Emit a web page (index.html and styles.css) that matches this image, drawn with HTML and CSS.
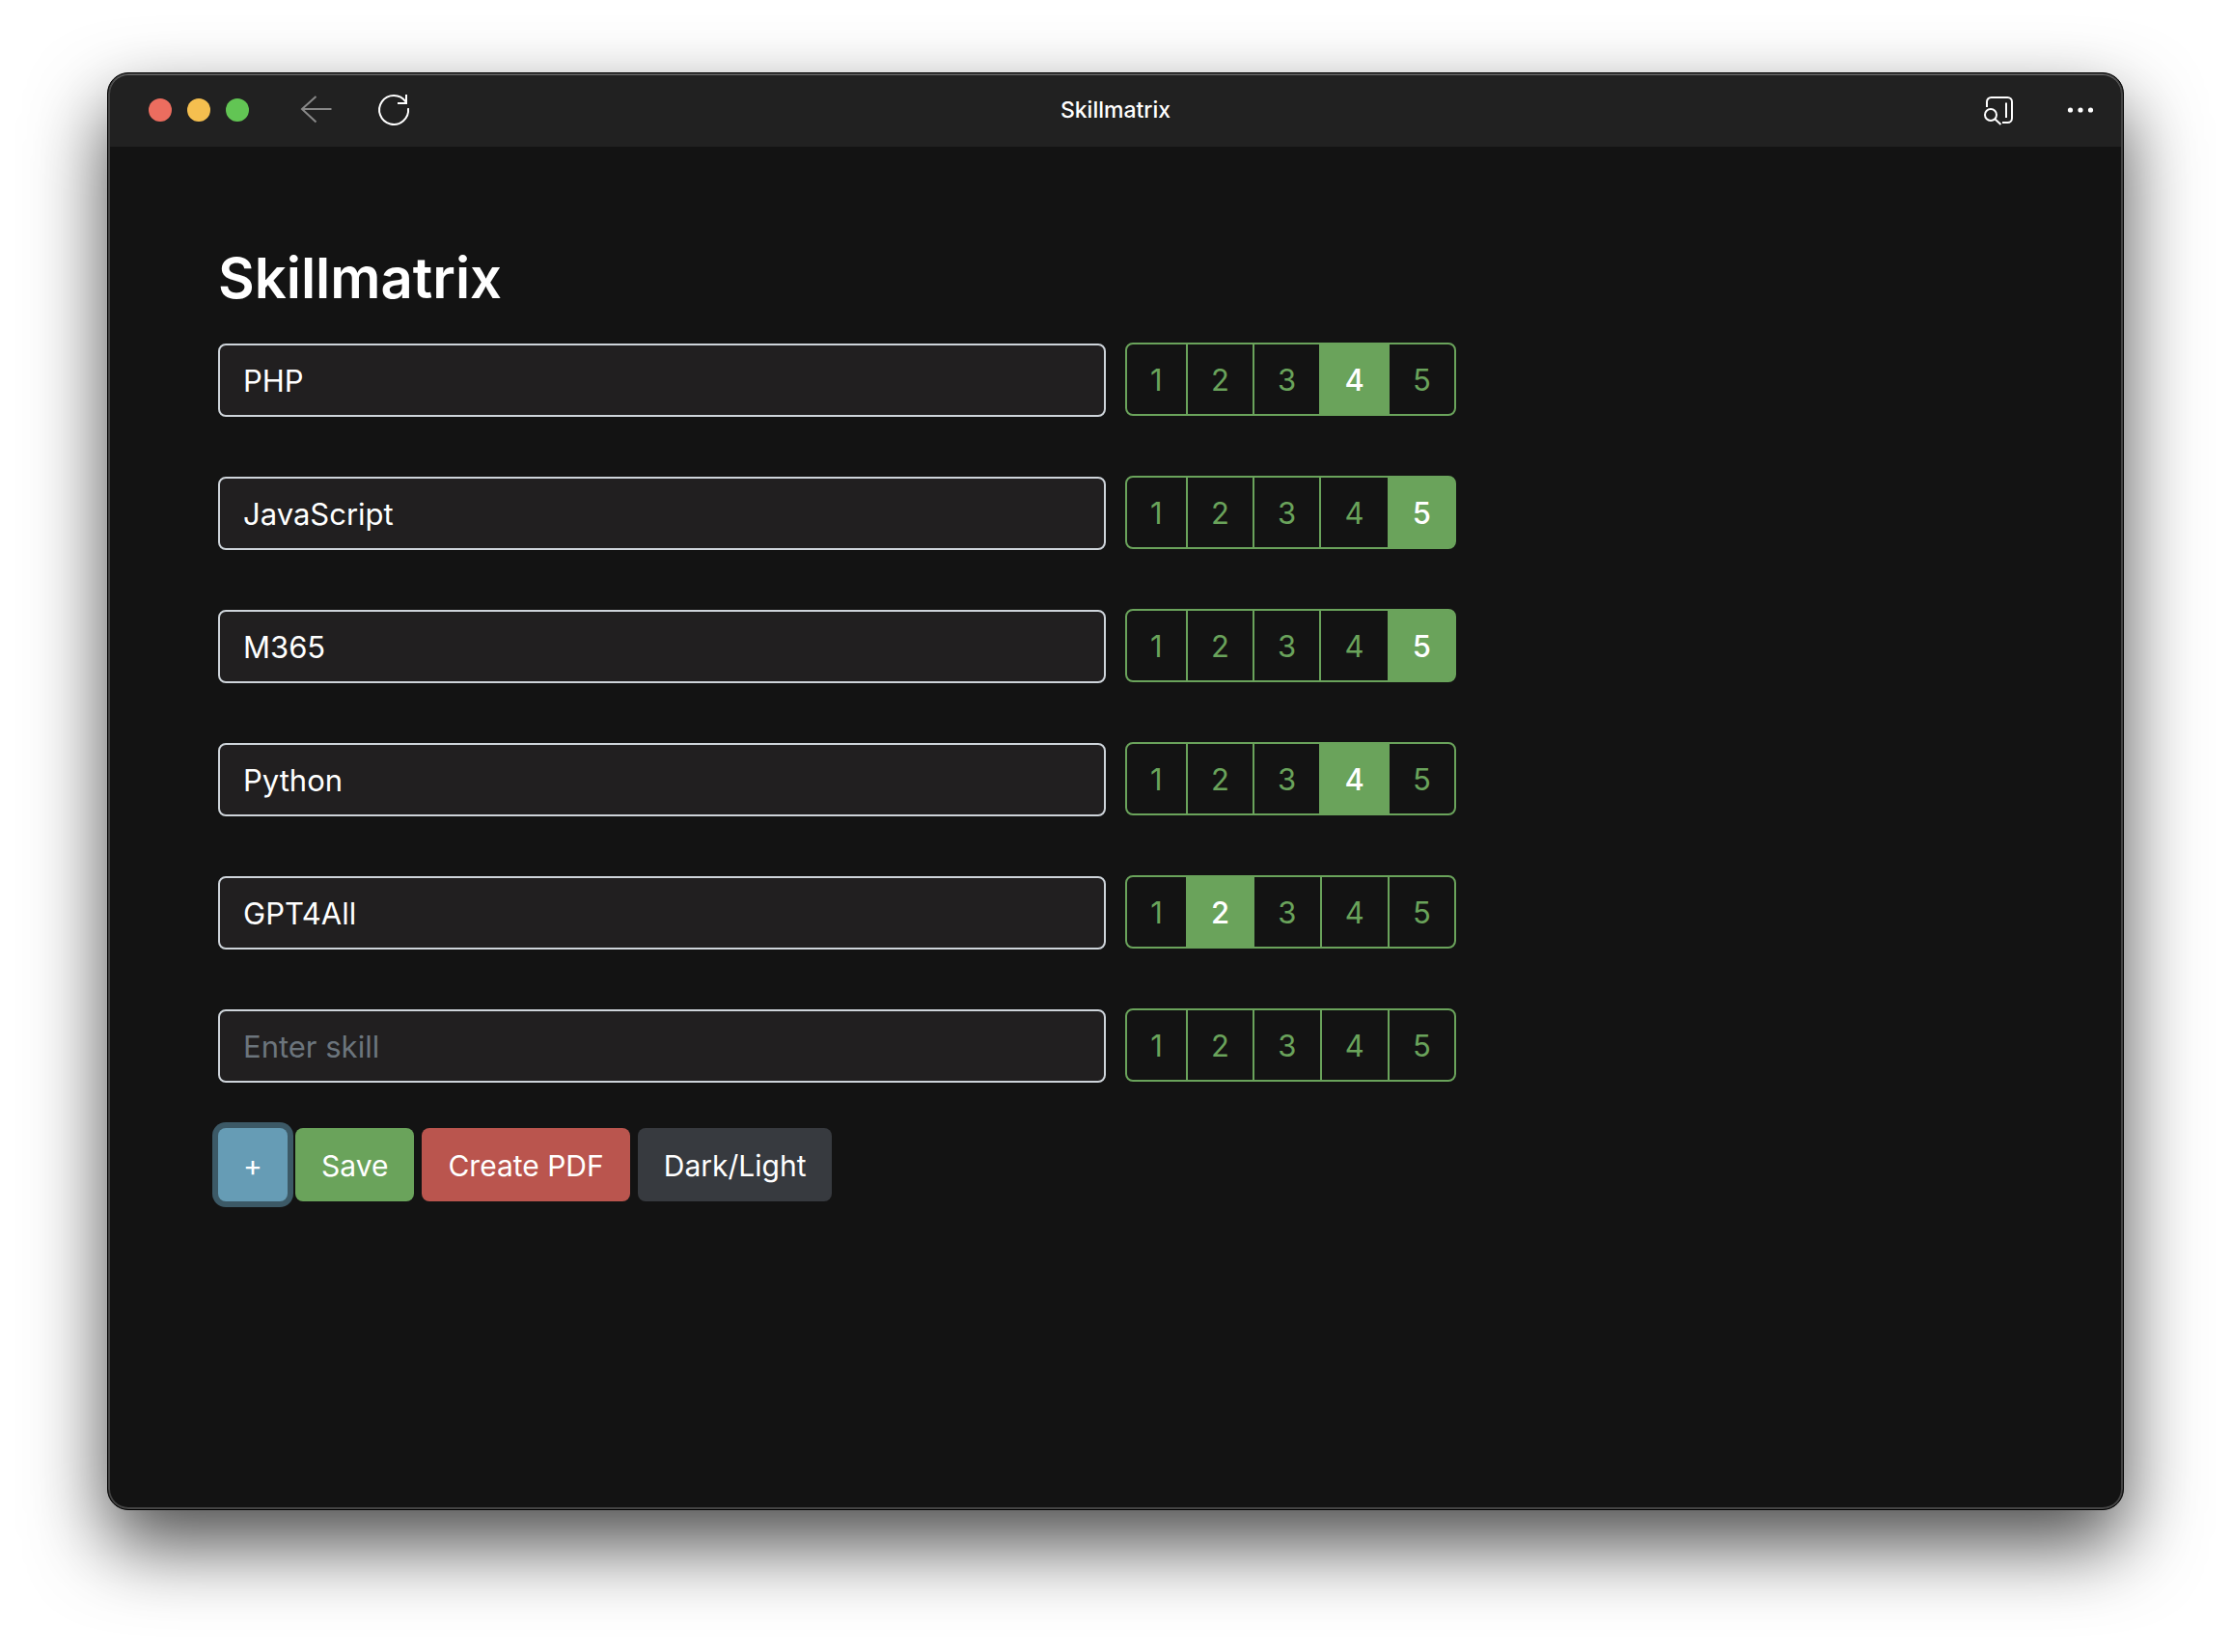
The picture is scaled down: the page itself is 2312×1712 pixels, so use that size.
FILE: index.html
```html
<!DOCTYPE html>
<html lang="en">
<head>
<meta charset="utf-8">
<meta name="viewport" content="width=device-width, initial-scale=1">
<title>Skillmatrix</title>
<link rel="stylesheet" href="styles.css">
</head>
<body>
<div class="window">
  <header class="titlebar">
    <div class="titlebar-left">
      <div class="lights">
        <button class="light light-close" type="button" aria-label="Close"></button>
        <button class="light light-minimize" type="button" aria-label="Minimize"></button>
        <button class="light light-zoom" type="button" aria-label="Zoom"></button>
      </div>
      <div class="nav">
        <button class="icon-button back" type="button" aria-label="Back" disabled>
          <svg viewBox="0 0 36 36"><path d="M33.500 17H3.500M17.500 4L3 17l14.500 13.500"/></svg>
        </button>
        <button class="icon-button" type="button" aria-label="Reload">
          <svg viewBox="0 0 36 36"><path d="M33 16.200A15 15 0 1 1 30.500 9.500M31 2v9h-9"/></svg>
        </button>
      </div>
    </div>
    <div class="titlebar-text">Skillmatrix</div>
    <div class="titlebar-right">
      <button class="icon-button" type="button" aria-label="Search in sidebar">
        <svg viewBox="0 0 36 36"><path d="M6 15V9.500A4.500 4.500 0 0 1 10.500 5h17A4.500 4.500 0 0 1 32 9.500v17A4.500 4.500 0 0 1 27.500 31H22M26 10.500v15.500"/><circle cx="10" cy="23" r="6"/><path d="M14.500 27.500l6 5.500"/></svg>
      </button>
      <button class="icon-button dots" type="button" aria-label="More">
        <svg viewBox="0 0 36 36"><circle cx="7.500" cy="18" r="2.600"/><circle cx="18" cy="18" r="2.600"/><circle cx="28.500" cy="18" r="2.600"/></svg>
      </button>
    </div>
  </header>
  <main class="content">
    <h1 class="heading">Skillmatrix</h1>
    <form class="form">
      <div class="skills">
        <div class="skill">
          <input class="skill-name" type="text" value="PHP" placeholder="Enter skill" aria-label="Skill 1">
          <div class="rating" role="radiogroup" aria-label="Level of skill 1">
            <input class="rating-input" type="radio" name="s1" id="s1-1"><label class="rating-label" for="s1-1">1</label>
            <input class="rating-input" type="radio" name="s1" id="s1-2"><label class="rating-label" for="s1-2">2</label>
            <input class="rating-input" type="radio" name="s1" id="s1-3"><label class="rating-label" for="s1-3">3</label>
            <input class="rating-input" type="radio" name="s1" id="s1-4" checked><label class="rating-label" for="s1-4">4</label>
            <input class="rating-input" type="radio" name="s1" id="s1-5"><label class="rating-label" for="s1-5">5</label>
          </div>
        </div>
        <div class="skill">
          <input class="skill-name" type="text" value="JavaScript" placeholder="Enter skill" aria-label="Skill 2">
          <div class="rating" role="radiogroup" aria-label="Level of skill 2">
            <input class="rating-input" type="radio" name="s2" id="s2-1"><label class="rating-label" for="s2-1">1</label>
            <input class="rating-input" type="radio" name="s2" id="s2-2"><label class="rating-label" for="s2-2">2</label>
            <input class="rating-input" type="radio" name="s2" id="s2-3"><label class="rating-label" for="s2-3">3</label>
            <input class="rating-input" type="radio" name="s2" id="s2-4"><label class="rating-label" for="s2-4">4</label>
            <input class="rating-input" type="radio" name="s2" id="s2-5" checked><label class="rating-label" for="s2-5">5</label>
          </div>
        </div>
        <div class="skill">
          <input class="skill-name" type="text" value="M365" placeholder="Enter skill" aria-label="Skill 3">
          <div class="rating" role="radiogroup" aria-label="Level of skill 3">
            <input class="rating-input" type="radio" name="s3" id="s3-1"><label class="rating-label" for="s3-1">1</label>
            <input class="rating-input" type="radio" name="s3" id="s3-2"><label class="rating-label" for="s3-2">2</label>
            <input class="rating-input" type="radio" name="s3" id="s3-3"><label class="rating-label" for="s3-3">3</label>
            <input class="rating-input" type="radio" name="s3" id="s3-4"><label class="rating-label" for="s3-4">4</label>
            <input class="rating-input" type="radio" name="s3" id="s3-5" checked><label class="rating-label" for="s3-5">5</label>
          </div>
        </div>
        <div class="skill">
          <input class="skill-name" type="text" value="Python" placeholder="Enter skill" aria-label="Skill 4">
          <div class="rating" role="radiogroup" aria-label="Level of skill 4">
            <input class="rating-input" type="radio" name="s4" id="s4-1"><label class="rating-label" for="s4-1">1</label>
            <input class="rating-input" type="radio" name="s4" id="s4-2"><label class="rating-label" for="s4-2">2</label>
            <input class="rating-input" type="radio" name="s4" id="s4-3"><label class="rating-label" for="s4-3">3</label>
            <input class="rating-input" type="radio" name="s4" id="s4-4" checked><label class="rating-label" for="s4-4">4</label>
            <input class="rating-input" type="radio" name="s4" id="s4-5"><label class="rating-label" for="s4-5">5</label>
          </div>
        </div>
        <div class="skill">
          <input class="skill-name" type="text" value="GPT4All" placeholder="Enter skill" aria-label="Skill 5">
          <div class="rating" role="radiogroup" aria-label="Level of skill 5">
            <input class="rating-input" type="radio" name="s5" id="s5-1"><label class="rating-label" for="s5-1">1</label>
            <input class="rating-input" type="radio" name="s5" id="s5-2" checked><label class="rating-label" for="s5-2">2</label>
            <input class="rating-input" type="radio" name="s5" id="s5-3"><label class="rating-label" for="s5-3">3</label>
            <input class="rating-input" type="radio" name="s5" id="s5-4"><label class="rating-label" for="s5-4">4</label>
            <input class="rating-input" type="radio" name="s5" id="s5-5"><label class="rating-label" for="s5-5">5</label>
          </div>
        </div>
        <div class="skill">
          <input class="skill-name" type="text" placeholder="Enter skill" aria-label="Skill 6">
          <div class="rating" role="radiogroup" aria-label="Level of skill 6">
            <input class="rating-input" type="radio" name="s6" id="s6-1"><label class="rating-label" for="s6-1">1</label>
            <input class="rating-input" type="radio" name="s6" id="s6-2"><label class="rating-label" for="s6-2">2</label>
            <input class="rating-input" type="radio" name="s6" id="s6-3"><label class="rating-label" for="s6-3">3</label>
            <input class="rating-input" type="radio" name="s6" id="s6-4"><label class="rating-label" for="s6-4">4</label>
            <input class="rating-input" type="radio" name="s6" id="s6-5"><label class="rating-label" for="s6-5">5</label>
          </div>
        </div>
      </div>
      <div class="actions">
        <button class="button button-add" type="button">+</button>
        <button class="button button-save" type="button">Save</button>
        <button class="button button-pdf" type="button">Create PDF</button>
        <button class="button button-theme" type="button">Dark/Light</button>
      </div>
    </form>
  </main>
</div>
</body>
</html>
```
FILE: styles.css
```css
*, *::before, *::after { box-sizing: border-box; }

body {
  margin: 0;
  padding: 75px 111px 147px;
  background: #fff;
  color: #fff;
  font-family: Inter, "Liberation Sans", sans-serif;
  font-size: 31px;
  line-height: 48px;
}

.window {
  min-height: calc(100vh - 222px);
  border: 1px solid #000;
  border-radius: 22px;
  background: #131313;
  box-shadow: inset 0 0 0 2px #444, 0 36px 80px rgba(0, 0, 0, 0.7);
  padding: 2px;
}

.titlebar {
  display: grid;
  grid-template-columns: 1fr auto 1fr;
  align-items: center;
  height: 74px;
  padding: 0 24px 2px;
  border-radius: 19px 19px 0 0;
  background: #212121;
  box-shadow: 0 -1px 0 #666;
}

.titlebar-left { display: flex; align-items: center; gap: 52px; padding-left: 16px; }
.titlebar-right { display: flex; align-items: center; justify-content: flex-end; gap: 49px; }
.titlebar-text { font-size: 23px; line-height: 32px; font-weight: 500; }

.lights { display: flex; gap: 16px; }
.light { width: 24px; height: 24px; padding: 0; border: 0; border-radius: 50%; }
.light-close { background: #ec6d5f; }
.light-minimize { background: #f5bf4f; }
.light-zoom { background: #62c554; }

.nav { display: flex; gap: 44px; }

.icon-button { display: block; width: 36px; height: 36px; padding: 0; border: 0; background: none; color: #fff; }
.icon-button svg { display: block; width: 36px; height: 36px; fill: none; stroke: currentColor; stroke-width: 2; }
.back { color: #888; }
.dots svg { fill: currentColor; stroke: none; }

.content { padding: 98px 112px; }

.heading { margin: 0 0 28px; font-size: 58px; line-height: 77px; font-weight: 600; }

.skills { display: grid; gap: 61px; }

.skill {
  display: grid;
  grid-template-columns: minmax(0, 1fr) minmax(0, 1fr);
  gap: 20px;
  height: 77px;
}

.skill-name {
  align-self: end;
  width: 100%;
  height: 76px;
  padding: 12px 24px;
  border: 2px solid #ced4da;
  border-radius: 8px;
  background: #211f20;
  color: #fff;
  font: inherit;
}
.skill-name::placeholder { color: #6c757d; opacity: 1; }

.rating { display: flex; position: relative; width: 343px; height: 76px; }

.rating-input { position: absolute; opacity: 0; pointer-events: none; }

.rating-label {
  flex: 1 1 auto;
  margin-left: -2px;
  padding: 13px 22px 11px;
  border: 2px solid #6aa35b;
  color: #6aa35b;
  text-align: center;
}
.rating-label:first-of-type { margin-left: 0; border-radius: 8px 0 0 8px; }
.rating-label:last-of-type { border-radius: 0 8px 8px 0; }
.rating-input:checked + .rating-label { background: #6aa35b; color: #fff; font-weight: 500; }

.actions { display: flex; gap: 8px; margin-top: 47px; }

.button {
  height: 76px;
  padding: 14px 27px 12px;
  border: 0;
  border-radius: 8px;
  color: #fff;
  font: inherit;
  font-size: 30px;
}
.button-add { width: 72px; padding-inline: 24px; background: #669cb5; box-shadow: 0 0 0 6px #3c5966; }
.button-save { background: #6aa35b; }
.button-pdf { background: #ba554e; }
.button-theme { background: #373a3f; }
```
